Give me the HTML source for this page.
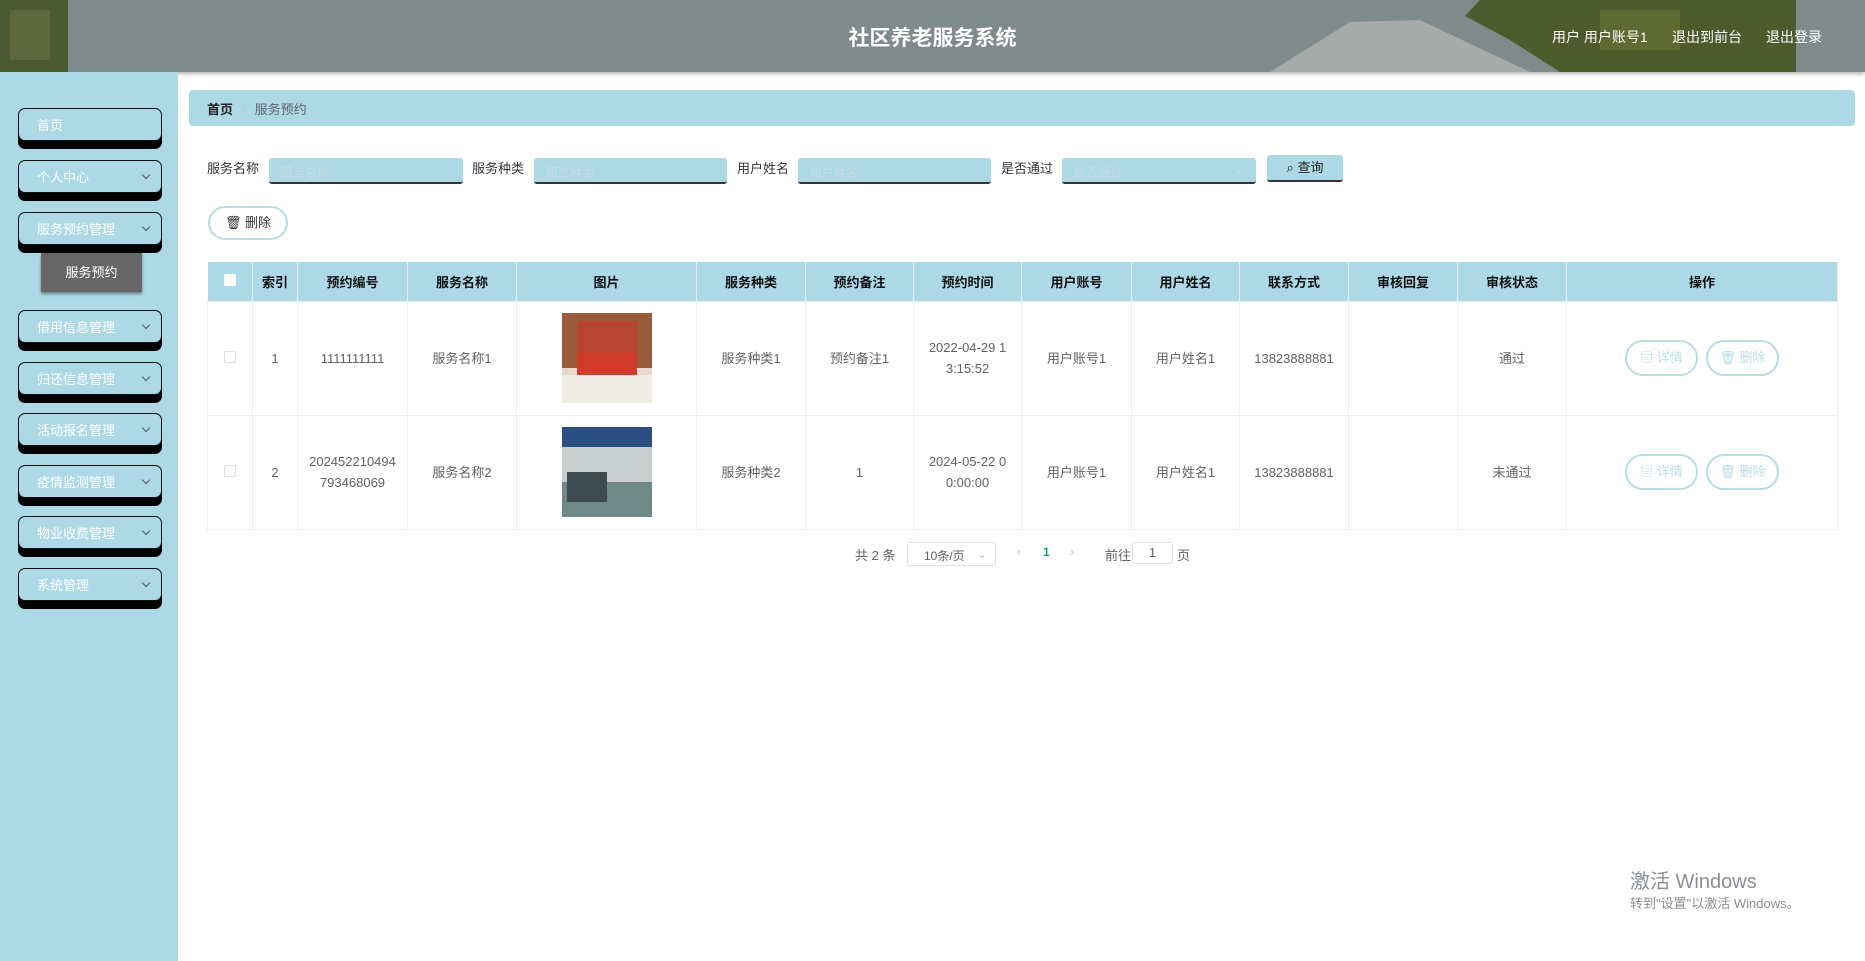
<!DOCTYPE html>
<html><head><meta charset="utf-8"><style>
*{box-sizing:border-box;margin:0;padding:0}
body{width:1865px;height:961px;position:relative;overflow:hidden;background:#fff;font-family:"Liberation Sans","Noto Sans CJK SC",sans-serif;font-size:13px;color:#606266}
.hdr{position:absolute;left:0;top:0;width:1865px;height:72px;background:#7f8a8b;box-shadow:0 2px 4px rgba(0,0,0,.3);overflow:hidden}
.title{position:absolute;left:0;width:1865px;top:22px;text-align:center;color:#fff;font-size:21px;font-weight:bold}
.links{position:absolute;top:27px;color:#fff;font-size:14px}
.side{position:absolute;left:0;top:72px;width:178px;height:889px;background:#add8e6}
.mb{position:absolute;left:18px;width:144px;height:33px;background:#add8e6;border:1.5px solid #111;border-radius:7px;box-shadow:0 8px 0 #000;color:#fff;font-size:13px;padding:6px 0 0 18px}
.mb i{position:absolute;right:12px;top:11px;width:6px;height:6px;border-right:1px solid #555;border-bottom:1px solid #555;transform:rotate(45deg)}
.sub{position:absolute;left:41px;top:253px;width:101px;height:39px;background:#666;color:#fff;font-size:13px;text-align:center;line-height:39px;box-shadow:0 2px 3px rgba(0,0,0,.4)}
.bc{position:absolute;left:189px;top:90px;width:1666px;height:36px;background:#add8e6;border-radius:4px;padding:9px 18px;font-size:13px}
.lbl{position:absolute;top:158px;color:#333;font-size:13px}
.inp{position:absolute;top:158px;height:26px;background:#add8e6;border-bottom:2px solid #333;border-radius:3px;color:#c7dce4;font-size:12px;padding:6px 12px}
table{position:absolute;left:207px;top:262px;width:1630px;border-collapse:collapse;table-layout:fixed}
th{background:#add8e6;height:39px;color:#111;font-weight:bold;font-size:13px;border-right:1px solid #e8eef0}
td{height:114px;text-align:center;border:1px solid #ebeef5;font-size:13px;color:#606266;line-height:21px}
.cb{display:inline-block;width:12px;height:12px;border:1px solid #dcdfe6;border-radius:2px;background:#fff}
.ab{display:inline-block;width:73px;height:36px;border:2px solid #b8dce4;border-radius:18px;color:#bcdde5;line-height:32px;margin:0 4px;font-size:13px}
</style></head><body>
<div class="hdr">
<svg width="1865" height="72" style="position:absolute;left:0;top:0">
<rect x="0" y="0" width="68" height="72" fill="#4b5a33"/>
<rect x="10" y="10" width="40" height="50" fill="#6d7045" opacity=".6"/>
<polygon points="1270,72 1350,22 1420,20 1530,72" fill="#a6aaa8"/>
<polygon points="1465,16 1480,0 1796,0 1796,72 1560,72 1510,40" fill="#4d5a2c"/>
<rect x="1600" y="10" width="80" height="40" fill="#6a7436" opacity=".6"/>
</svg>
<div class="title">社区养老服务系统</div>
<div class="links" style="left:1552px">用户 用户账号1</div>
<div class="links" style="left:1672px">退出到前台</div>
<div class="links" style="left:1766px">退出登录</div>
</div>
<div class="side">
<div class="mb" style="top:36px">首页</div>
<div class="mb" style="top:88px">个人中心<i></i></div>
<div class="mb" style="top:140px">服务预约管理<i></i></div>
<div class="sub" style="top:181px">服务预约</div>
<div class="mb" style="top:238px">借用信息管理<i></i></div>
<div class="mb" style="top:290px">归还信息管理<i></i></div>
<div class="mb" style="top:341px">活动报名管理<i></i></div>
<div class="mb" style="top:393px">疫情监测管理<i></i></div>
<div class="mb" style="top:444px">物业收费管理<i></i></div>
<div class="mb" style="top:496px">系统管理<i></i></div>
</div>
<div class="bc"><b style="color:#222">首页</b><span style="color:#c0c4cc;margin:0 9px">/</span><span style="color:#606266">服务预约</span></div>
<div class="lbl" style="left:207px">服务名称</div><div class="inp" style="left:269px;width:194px">服务名称</div>
<div class="lbl" style="left:472px">服务种类</div><div class="inp" style="left:534px;width:193px">服务种类</div>
<div class="lbl" style="left:737px">用户姓名</div><div class="inp" style="left:798px;width:193px">用户姓名</div>
<div class="lbl" style="left:1001px">是否通过</div><div class="inp" style="left:1062px;width:194px">是否通过<span style="position:absolute;right:12px;top:4px">⌄</span></div>
<div style="position:absolute;left:1267px;top:155px;width:76px;height:27px;background:#add8e6;border-bottom:2px solid #333;border-radius:3px;color:#222;font-size:13px;text-align:center;line-height:26px">⌕ 查询</div>
<div style="position:absolute;left:208px;top:206px;width:80px;height:34px;border:2px solid #b8dce4;border-radius:17px;color:#333;text-align:center;line-height:30px;font-size:13px">🗑 删除</div>
<table>
<colgroup><col style="width:45px"><col style="width:45px"><col style="width:110px"><col style="width:109px"><col style="width:180px"><col style="width:109px"><col style="width:108px"><col style="width:108px"><col style="width:110px"><col style="width:108px"><col style="width:109px"><col style="width:109px"><col style="width:109px"><col style="width:271px"></colgroup>
<tr><th><span class="cb" style="border:none"></span></th><th>索引</th><th>预约编号</th><th>服务名称</th><th>图片</th><th>服务种类</th><th>预约备注</th><th>预约时间</th><th>用户账号</th><th>用户姓名</th><th>联系方式</th><th>审核回复</th><th>审核状态</th><th>操作</th></tr>
<tr><td><span class="cb"></span></td><td>1</td><td>1111111111</td><td>服务名称1</td><td><svg width="90" height="90" style="vertical-align:middle"><rect width="90" height="90" fill="#e8d9cc"/><rect y="0" width="90" height="55" fill="#9b5a3a"/><rect x="15" y="8" width="60" height="40" fill="#b8452f"/><rect x="15" y="40" width="60" height="25" fill="#d23a2a"/><rect y="62" width="90" height="28" fill="#eeeae4"/></svg></td><td>服务种类1</td><td>预约备注1</td><td>2022-04-29 1<br>3:15:52</td><td>用户账号1</td><td>用户姓名1</td><td>13823888881</td><td></td><td>通过</td><td><span class="ab">▤ 详情</span><span class="ab">🗑 删除</span></td></tr>
<tr><td><span class="cb"></span></td><td>2</td><td>202452210494<br>793468069</td><td>服务名称2</td><td><svg width="90" height="90" style="vertical-align:middle"><rect width="90" height="90" fill="#c9cfcf"/><rect width="90" height="20" fill="#2b4f80"/><rect y="55" width="90" height="35" fill="#6f8a86"/><rect x="5" y="45" width="40" height="30" fill="#3d4a50"/></svg></td><td>服务种类2</td><td>1</td><td>2024-05-22 0<br>0:00:00</td><td>用户账号1</td><td>用户姓名1</td><td>13823888881</td><td></td><td>未通过</td><td><span class="ab">▤ 详情</span><span class="ab">🗑 删除</span></td></tr>
</table>
<div style="position:absolute;left:855px;top:545px;font-size:13px">共 2 条</div>
<div style="position:absolute;left:907px;top:542px;width:89px;height:24px;border:1px solid #dcdfe6;border-radius:3px;font-size:12px;padding:4px 0 0 16px">10条/页<span style="position:absolute;right:8px;color:#c0c4cc">⌄</span></div>
<div style="position:absolute;left:1017px;top:544px;color:#c0c4cc">‹</div>
<div style="position:absolute;left:1043px;top:545px;color:#16a085;font-weight:bold;font-size:12px">1</div>
<div style="position:absolute;left:1070px;top:544px;color:#c0c4cc">›</div>
<div style="position:absolute;left:1105px;top:545px">前往</div>
<div style="position:absolute;left:1132px;top:542px;width:41px;height:22px;border:1px solid #dcdfe6;border-radius:3px;text-align:center;line-height:20px">1</div>
<div style="position:absolute;left:1177px;top:545px">页</div>
<div style="position:absolute;left:1630px;top:865px;color:#8b8f93;font-size:20px">激活 Windows</div>
<div style="position:absolute;left:1630px;top:893px;color:#8b8f93;font-size:13px">转到"设置"以激活 Windows。</div>
</body></html>
